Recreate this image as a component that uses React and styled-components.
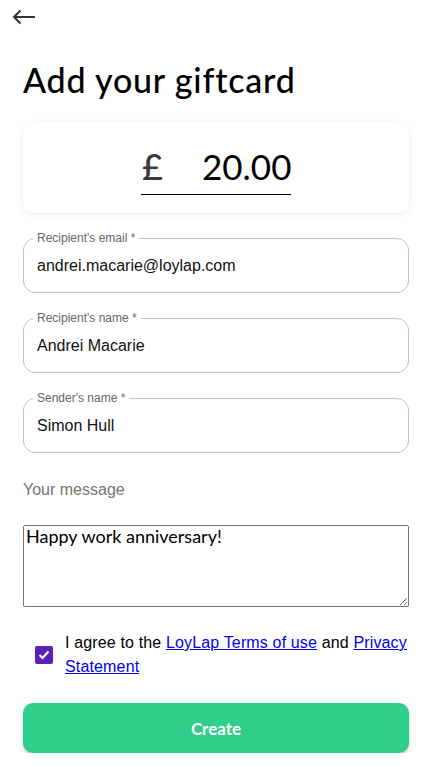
import React from 'react';
import styled, { createGlobalStyle } from 'styled-components';

//  ----------------------------------------------------------------------------
//  Styles
//  ----------------------------------------------------------------------------
const GlobalStyle = createGlobalStyle`
    body {
        margin: 0;
        background: #fff;
        font-family: "Liberation Sans", Arial, sans-serif;
    }
`;

const Page = styled.div`
    display: flex;
    flex-direction: column;
    padding: 0 17px 0 23px;
    width: 426px;
    box-sizing: border-box;
`;

const BackButton = styled.button`
    align-self: flex-start;
    background: transparent;
    border: none;
    cursor: pointer;
    display: flex;
    margin: 7px 0 0 -11px;
    padding: 0;
`;

const Title = styled.h1`
    color: #000;
    font-family: "Lato", sans-serif;
    font-size: 34px;
    font-weight: 500;
    letter-spacing: 0.8px;
    margin: 32px 0 22px;
`;

const AmountCard = styled.div`
    align-items: center;
    border-radius: 10px;
    box-shadow: 0 1px 6px rgba(0, 0, 0, 0.08);
    display: flex;
    height: 91px;
    justify-content: center;
`;

const AmountLine = styled.div`
    align-items: baseline;
    border-bottom: 1px solid #000;
    box-sizing: border-box;
    display: flex;
    margin-top: 4px;
    padding: 0 0 6px 1px;
    width: 150px;
`;

const Currency = styled.span`
    color: #3a3a3e;
    flex: 0 0 60px;
    font-family: "Lato", sans-serif;
    font-size: 36px;
    font-weight: 500;
`;

const Amount = styled.span`
    color: #000;
    font-family: "Lato", sans-serif;
    font-size: 35px;
    white-space: nowrap;
`;

const Fields = styled.div`
    display: flex;
    flex-direction: column;
    gap: 18px;
    margin-top: 18px;
`;

const Field = styled.fieldset`
    border: 1px solid #c4c4c4;
    border-radius: 12px;
    box-sizing: border-box;
    height: 62px;
    margin: 0;
    padding: 11px 13px 0;
`;

const Legend = styled.legend`
    color: #666;
    font-size: 12px;
    margin-left: -4px;
    padding: 0 4px;
`;

const Value = styled.span`
    color: #111;
    display: block;
    font-size: 16px;
    line-height: 20px;
`;

const MessageLabel = styled.label`
    color: #757575;
    font-size: 16px;
    margin: 28px 0 26px;
`;

const Message = styled.textarea`
    border: 1px solid #767676;
    border-radius: 2px;
    box-sizing: border-box;
    color: #000;
    font-family: "Lato", sans-serif;
    font-size: 18px;
    height: 82px;
    line-height: 1.1;
    padding: 1px 2px;
    resize: vertical;
    width: 100%;
`;

const Agree = styled.div`
    align-items: center;
    display: flex;
    gap: 12px;
    margin: 24px 0 0 12px;
`;

const Check = styled.span`
    align-items: center;
    background: #5b21b6;
    border-radius: 2px;
    display: flex;
    flex-shrink: 0;
    height: 18px;
    justify-content: center;
    width: 18px;
`;

const AgreeText = styled.p`
    color: #000;
    font-size: 16px;
    letter-spacing: 0.15px;
    line-height: 24px;
    margin: 0;
`;

const Link = styled.a`
    color: #0000ee;
    text-decoration: underline;
`;

const CreateButton = styled.button`
    background: #2fcf8b;
    border: none;
    border-radius: 10px;
    box-shadow: 0 2px 4px rgba(0, 0, 0, 0.22);
    color: #fff;
    cursor: pointer;
    font-family: "Lato", sans-serif;
    font-size: 17px;
    font-weight: 700;
    height: 50px;
    margin-top: 24px;
    width: 100%;
`;

//  ----------------------------------------------------------------------------
//  Component
//  ----------------------------------------------------------------------------
const fields = [
    { label: "Recipient's email *", value: 'andrei.macarie@loylap.com' },
    { label: "Recipient's name *", value: 'Andrei Macarie' },
    { label: "Sender's name *", value: 'Simon Hull' },
];

const App = () => {
    return (
        <Page>
            <GlobalStyle />
            <BackButton aria-label="Back">
                <svg width="24" height="20" viewBox="0 0 24 20" fill="none">
                    <path d="M2 10 H23 M8.5 3.5 L2 10 L8.5 16.5" stroke="#333" strokeWidth="2" />
                </svg>
            </BackButton>
            <Title>Add your giftcard</Title>
            <AmountCard>
                <AmountLine>
                    <Currency>£</Currency>
                    <Amount>20.00</Amount>
                </AmountLine>
            </AmountCard>
            <Fields>
                {fields.map((f, i) => (
                    <Field key={i}>
                        <Legend>{f.label}</Legend>
                        <Value>{f.value}</Value>
                    </Field>
                ))}
            </Fields>
            <MessageLabel>Your message</MessageLabel>
            <Message defaultValue="Happy work anniversary!" />
            <Agree>
                <Check>
                    <svg width="12" height="10" viewBox="0 0 12 10" fill="none">
                        <path d="M1.5 5 L4.5 8 L10.5 1.5" stroke="#fff" strokeWidth="2" />
                    </svg>
                </Check>
                <AgreeText>
                    I agree to the <Link href="#">LoyLap Terms of use</Link> and <Link href="#">Privacy Statement</Link>
                </AgreeText>
            </Agree>
            <CreateButton>Create</CreateButton>
        </Page>
    );
};

export default App;
